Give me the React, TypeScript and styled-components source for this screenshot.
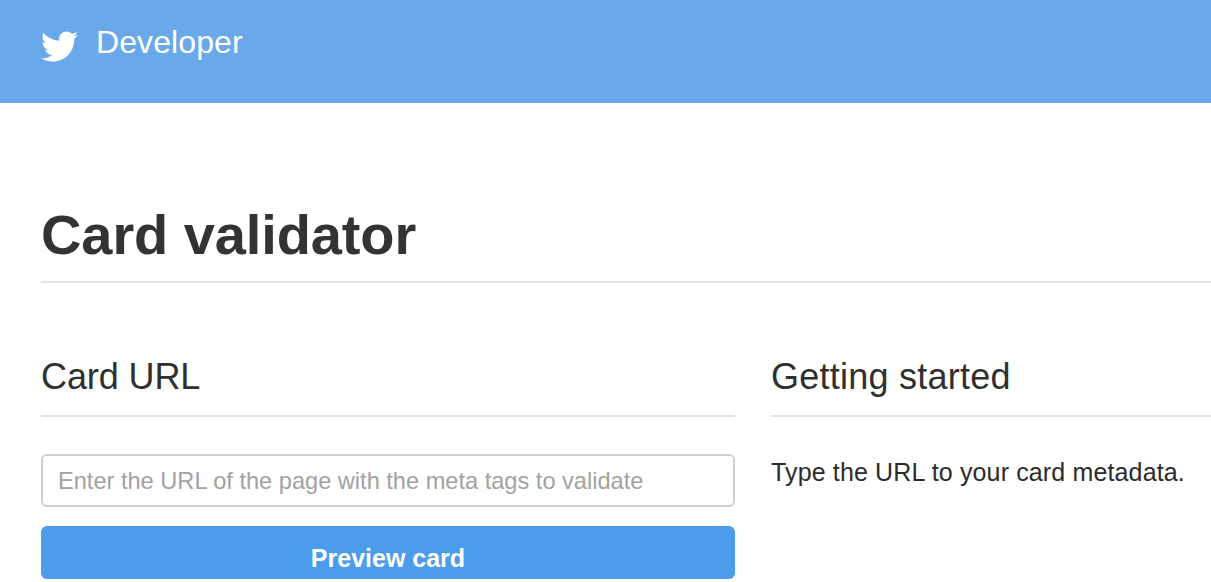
import React from "react";
import styled, { createGlobalStyle } from "styled-components";
import { FaTwitter } from "react-icons/fa";

const Global = createGlobalStyle`
  html, body { margin: 0; padding: 0; background: #fff; overflow: hidden; }
  body { font-family: "Liberation Sans", Arial, sans-serif; color: #2f2f2f; }
`;

const Page = styled.div`
  width: 1211px;
  height: 582px;
  overflow: hidden;
`;

const Header = styled.header`
  height: 103px;
  background: #69a9e9;
  display: flex;
  align-items: flex-start;
  gap: 18px;
  padding: 23px 0 0 41px;
  box-sizing: border-box;
  color: #fff;
`;

const Bird = styled(FaTwitter)`
  width: 37px;
  height: 37px;
  margin-top: 5px;
`;

const Brand = styled.div`
  font-size: 32px;
  line-height: 38px;
  letter-spacing: 0.1px;
`;

const Main = styled.main`
  padding: 0 0 0 41px;
`;

const Title = styled.h1`
  margin: 0;
  padding: 98px 0 12px;
  font-size: 56px;
  line-height: 68px;
  font-weight: 700;
  letter-spacing: -0.1px;
  color: #333;
  border-bottom: 2px solid #e4e4e4;
`;

const Columns = styled.div`
  display: grid;
  grid-template-columns: 694px 480px;
  column-gap: 36px;
  padding-top: 68px;
`;

const SectionTitle = styled.h2<{ $spacing: number }>`
  margin: 0;
  height: 66px;
  box-sizing: border-box;
  font-size: 36px;
  line-height: 52px;
  font-weight: 400;
  letter-spacing: ${(p) => p.$spacing}px;
  color: #2f2f2f;
  border-bottom: 2px solid #e4e4e4;
`;

const Input = styled.input`
  display: block;
  width: 100%;
  height: 53px;
  box-sizing: border-box;
  margin-top: 37px;
  padding: 2px 15px 0;
  border: 2px solid #d0d0d0;
  border-radius: 6px;
  background: #fff;
  font: 400 23.6px "Liberation Sans", Arial, sans-serif;
  &::placeholder { color: #a2a2a2; opacity: 1; }
`;

const Button = styled.button`
  display: block;
  width: 100%;
  height: 53px;
  margin-top: 19px;
  padding: 11px 0 0;
  border: 0;
  border-radius: 6px;
  background: #4b9ceb;
  color: #fff;
  font: 700 25px "Liberation Sans", Arial, sans-serif;
`;

const Help = styled.p`
  margin: 0;
  padding-top: 41px;
  font-size: 25px;
  line-height: 28px;
  letter-spacing: 0.14px;
  color: #2b2b2b;
  white-space: nowrap;
`;

export default function App() {
  return (
    <Page>
      <Global />
      <Header>
        <Bird />
        <Brand>Developer</Brand>
      </Header>
      <Main>
        <Title>Card validator</Title>
        <Columns>
          <section>
            <SectionTitle $spacing={-0.1}>Card URL</SectionTitle>
            <Input placeholder="Enter the URL of the page with the meta tags to validate" />
            <Button>Preview card</Button>
          </section>
          <section>
            <SectionTitle $spacing={0.25}>Getting started</SectionTitle>
            <Help>Type the URL to your card metadata.</Help>
          </section>
        </Columns>
      </Main>
    </Page>
  );
}
